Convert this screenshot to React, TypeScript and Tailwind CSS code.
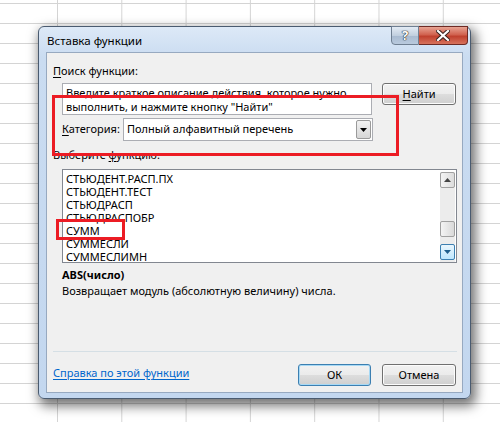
import React from "react";

const font = "font-['Segoe_UI','Noto_Sans',sans-serif] text-[11px] text-black";

const items = [
  "СТЬЮДЕНТ.РАСП.ПХ",
  "СТЬЮДЕНТ.ТЕСТ",
  "СТЬЮДРАСП",
  "СТЬЮДРАСПОБР",
  "СУММ",
  "СУММЕСЛИ",
  "СУММЕСЛИМН",
];

function Button({ children, focused }: { children: React.ReactNode; focused?: boolean }) {
  return (
    <div
      className={`flex h-[22px] items-center justify-center rounded-[3px] border ${
        focused ? "border-[#3c7fb1] shadow-[inset_0_0_0_1px_#a7d9f5]" : "border-[#707070] shadow-[inset_0_0_0_1px_#fcfcfc]"
      } bg-[linear-gradient(to_bottom,#f2f2f2_0%,#ebebeb_50%,#dddddd_51%,#cfcfcf_100%)]`}
    >
      {children}
    </div>
  );
}

function ScrollBtn({ down, hot }: { down?: boolean; hot?: boolean }) {
  return (
    <div
      className={`flex h-[16px] w-[15px] items-center justify-center rounded-[2px] border ${
        hot
          ? "border-[#3c7fb1] bg-[linear-gradient(to_bottom,#eaf6fd,#bee6fd)]"
          : "border-[#a0a0a0] bg-[linear-gradient(to_right,#f4f4f4,#dcdcdc)]"
      }`}
    >
      <svg width="7" height="4" viewBox="0 0 7 4">
        {down ? (
          <path d="M0 0 H7 L3.5 4 Z" fill={hot ? "#1f5e8c" : "#444"} />
        ) : (
          <path d="M0 4 H7 L3.5 0 Z" fill="#444" />
        )}
      </svg>
    </div>
  );
}

export default function App() {
  return (
    <div
      className={`relative h-[422px] w-[500px] overflow-hidden whitespace-nowrap bg-white bg-[linear-gradient(to_right,#d4d4d4_1px,transparent_1px),linear-gradient(to_bottom,#d4d4d4_1px,transparent_1px)] bg-[size:64.3px_20px] bg-[position:57px_3px] ${font}`}
    >
      {/* Dialog window */}
      <div className="absolute left-[38px] top-[26px] flex h-[373px] w-[433px] flex-col rounded-[6px] border border-[#4a5b70] bg-[linear-gradient(to_bottom,#dde9f7,#cadcf1_30px,#c3d7ef)] shadow-[3px_5px_12px_2px_rgba(0,0,0,0.55)]">
        {/* Title bar */}
        <div className="relative flex h-[25px] shrink-0 items-center pl-[8px] pt-[3px]">
          <span className="text-[11.5px] text-black">Вставка функции</span>
          <div className="absolute right-[2px] top-[-1px] flex">
            <div className="flex h-[19px] w-[28px] items-center justify-center rounded-bl-[4px] border border-[#6f7f92] bg-[linear-gradient(to_bottom,#e3ebf4,#c1cfdf_50%,#a8bad0_51%,#b9cade)]">
              <span className="text-[13px] font-bold leading-none text-white [text-shadow:0_0_1px_#222,0_0_1px_#222,0_0_1px_#222]">?</span>
            </div>
            <div className="flex h-[19px] w-[49px] items-center justify-center rounded-br-[4px] border border-l-0 border-[#6d2a24] bg-[linear-gradient(to_bottom,#e8a493,#d1624f_45%,#c0412e_55%,#d7725c)]">
              <svg width="14" height="11" viewBox="0 0 14 11">
                <path d="M2 1 L12 10 M12 1 L2 10" stroke="#3a2320" strokeWidth="4.2" strokeLinecap="square" />
                <path d="M2 1 L12 10 M12 1 L2 10" stroke="#fff" strokeWidth="2.2" strokeLinecap="square" />
              </svg>
            </div>
          </div>
        </div>

        {/* Client area */}
        <div className="mx-[7px] mb-[5px] flex flex-1 flex-col border border-[#97a9c0] bg-[#f0f0f0] px-[6px]">
          <div className="mt-[11px] h-[14px] leading-[14px]">
            <span className="underline decoration-1 underline-offset-2">П</span>оиск функции:
          </div>

          <div className="mt-[5px] flex items-start">
            <div className="ml-[9px] h-[32px] w-[311px] border border-[#abadb3] bg-white px-[3px] pt-[2px] leading-[14px]">
              <div>Введите краткое описание действия, которое нужно</div>
              <div>выполнить, и нажмите кнопку "Найти"</div>
            </div>
            <div className="ml-[10px] w-[74px]">
              <Button>
                <span className="underline decoration-1 underline-offset-2">Н</span>айти
              </Button>
            </div>
          </div>

          <div className="mt-[3px] flex h-[23px] items-center">
            <div className="ml-[9px] w-[61px]">
              <span className="underline decoration-1 underline-offset-2">К</span>атегория:
            </div>
            <div className="flex h-[23px] w-[250px] items-center justify-between border border-[#abadb3] bg-white pl-[3px] pr-[1px]">
              <span>Полный алфавитный перечень</span>
              <div className="flex h-[19px] w-[15px] items-center justify-center rounded-[2px] border border-[#9a9a9a] bg-[linear-gradient(to_bottom,#f2f2f2,#d6d6d6)]">
                <svg width="7" height="4" viewBox="0 0 7 4">
                  <path d="M0 0 H7 L3.5 4 Z" fill="#000" />
                </svg>
              </div>
            </div>
          </div>

          <div className="mt-[7px] h-[14px] leading-[14px]">
            Выберите <span className="underline decoration-1 underline-offset-2">ф</span>ункцию:
          </div>

          <div className="ml-[9px] mt-[7px] flex h-[94px] w-[395px] border border-[#828790] bg-white">
            <div className="flex-1 pl-[3px] pt-[2px]">
              {items.map((it) => (
                <div key={it} className="h-[13px] leading-[13px]">
                  {it}
                </div>
              ))}
            </div>
            <div className="mr-[1px] mt-[2px] flex w-[15px] flex-col bg-[#ececec]">
              <ScrollBtn />
              <div className="flex-1" />
              <div className="h-[16px] w-[15px] rounded-[2px] border border-[#a0a0a0] bg-[linear-gradient(to_right,#f4f4f4,#d9d9d9)]" />
              <div className="h-[7px]" />
              <ScrollBtn down hot />
              <div className="h-[2px]" />
            </div>
          </div>

          <div className="ml-[9px] mt-[5px] h-[14px] font-bold leading-[14px]">ABS(число)</div>
          <div className="ml-[9px] mt-[2px] h-[14px] leading-[14px]">
            Возвращает модуль (абсолютную величину) числа.
          </div>

          <div className="mt-[53px] h-px w-[404px] bg-[#d5dfe5]" />

          <div className="mt-[12px] flex items-start justify-between">
            <div className="mt-[2px] leading-[14px] text-[#0066cc] underline decoration-1 underline-offset-2">
              Справка по этой функции
            </div>
            <div className="flex gap-[11px]">
              <div className="w-[73px]">
                <Button focused>ОК</Button>
              </div>
              <div className="w-[74px]">
                <Button>Отмена</Button>
              </div>
            </div>
          </div>
        </div>
      </div>

      {/* Red annotation frames */}
      <div className="absolute left-[52px] top-[95px] h-[61px] w-[347px] border-[3px] border-[#ec1c24]" />
      <div className="absolute left-[56px] top-[219px] h-[21px] w-[69px] border-[3px] border-[#ec1c24]" />
    </div>
  );
}
